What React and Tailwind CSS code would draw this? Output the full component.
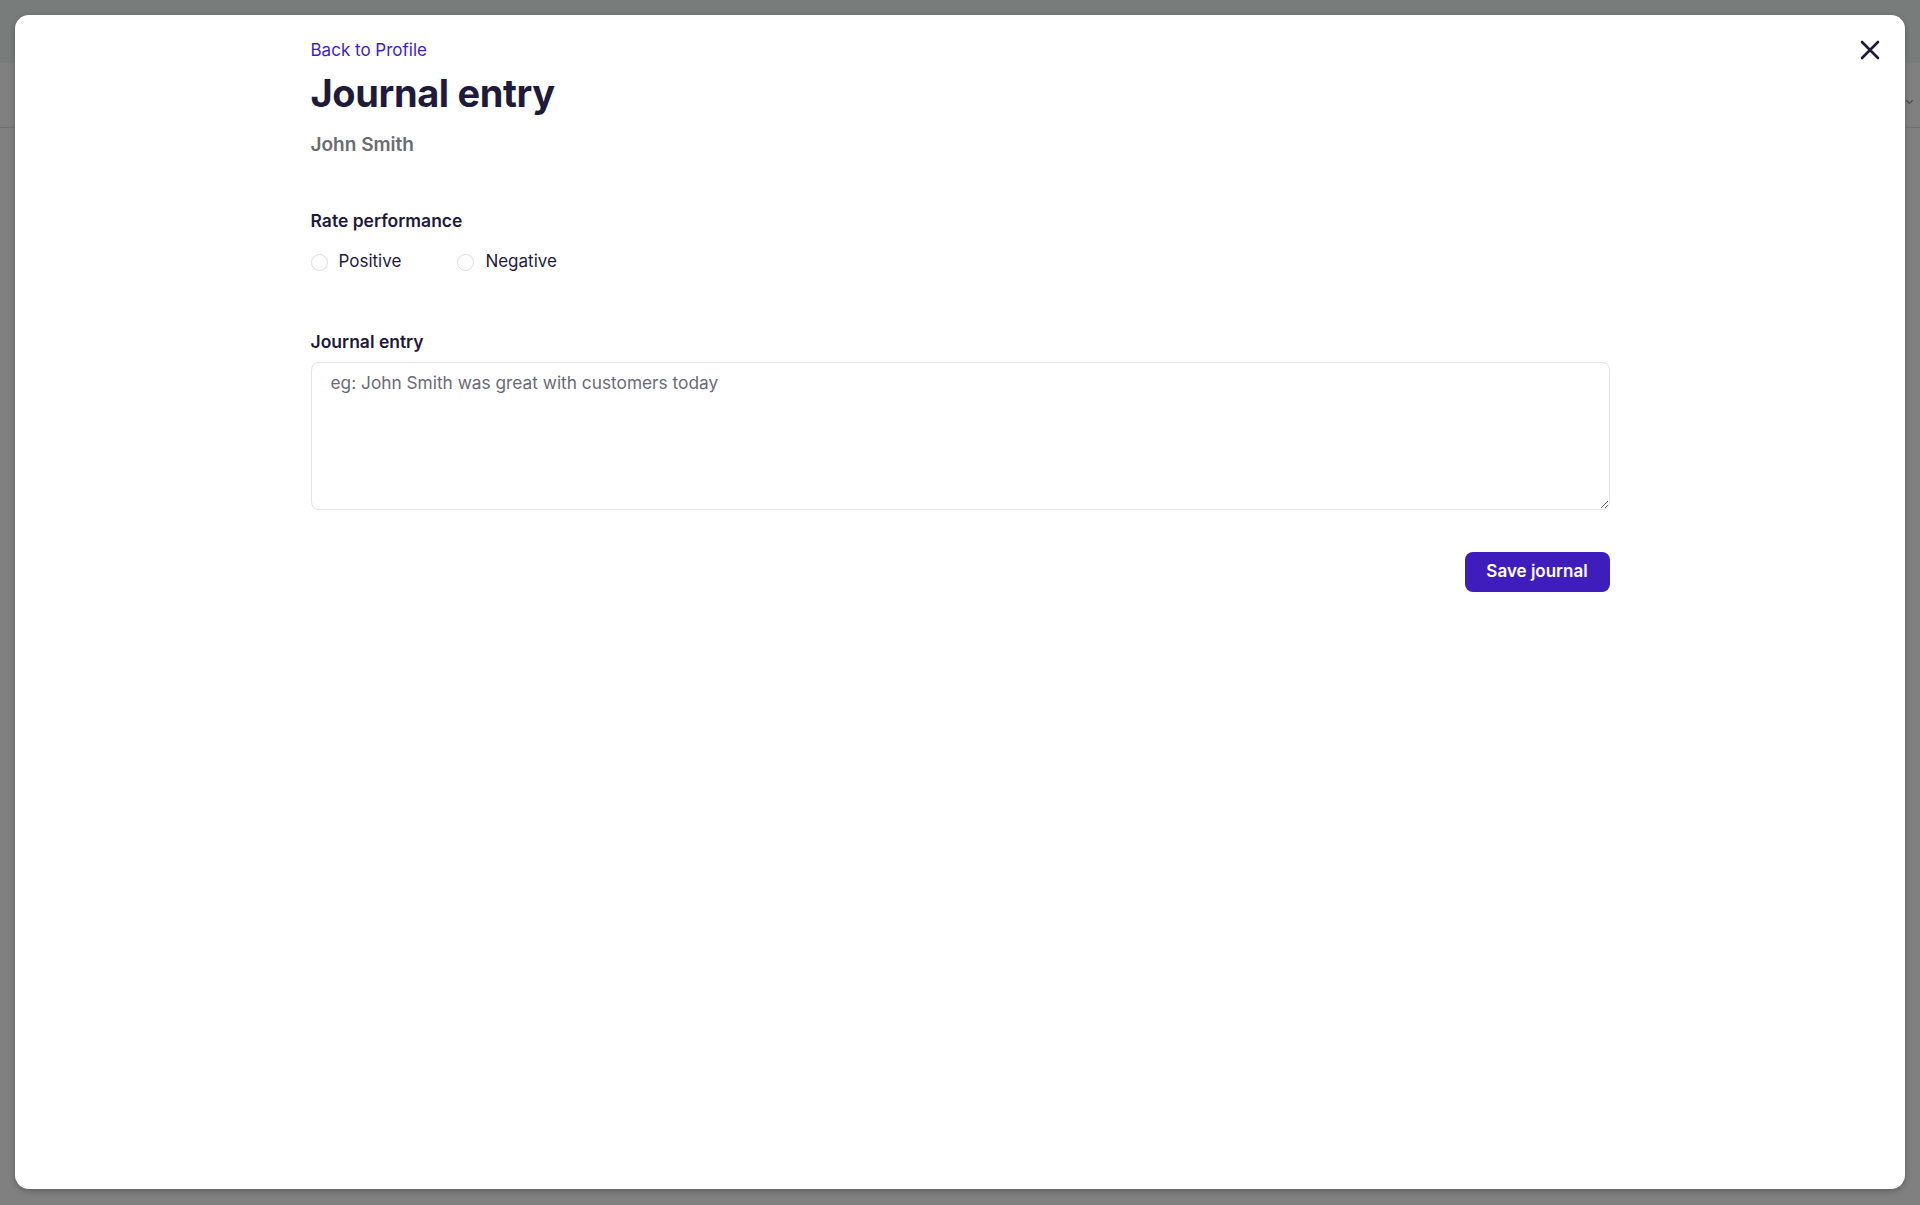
import React from "react";

export default function App() {
  return (
    <div className="relative w-[1920px] h-[1205px] overflow-hidden bg-[#808080]" style={{ fontFamily: "Inter, 'Noto Sans', sans-serif" }}>
      {/* background page under overlay */}
      <div className="h-[63px] bg-[#787d7c]" />
      <div className="h-[65px] bg-[#808080] border-b border-[#6f6f6f]" />
      <div className="absolute right-[6px] top-[92px] text-[#3a3a50] text-xs">⌄</div>

      {/* modal */}
      <div className="absolute left-[15px] top-[15px] w-[1890px] h-[1174px] bg-white rounded-[14px] shadow-[0_2px_6px_rgba(0,0,0,0.25)]">
        <button className="absolute right-[25px] top-[25px] w-[20px] h-[20px] flex items-center justify-center text-[#1e1a3c]">
          <svg width="20" height="20" viewBox="0 0 20 20" fill="none" stroke="currentColor" strokeWidth="2.6" strokeLinecap="round">
            <path d="M2 2L18 18M18 2L2 18" />
          </svg>
        </button>

        <div className="mx-auto w-[1299px] pt-[23px] flex flex-col">
          <a className="text-[17px] leading-6 text-[#3f1dcb]">Back to Profile</a>
          <h1 className="mt-[11px] text-[38px] leading-[40px] font-bold tracking-[-0.01em] text-[#1e1a3c]">Journal entry</h1>
          <div className="mt-[18px] text-[19px] leading-[28px] font-semibold text-[#6b6b70]">John Smith</div>

          <div className="mt-[50px] text-[17.5px] leading-6 font-semibold text-[#1e1a3c]">Rate performance</div>
          <div className="mt-[17px] flex items-center h-6 text-[17px] text-[#1e1a3c]">
            <label className="flex items-center">
              <span className="w-[17px] h-[17px] rounded-full border border-[#dcdce6] bg-white" />
              <span className="ml-[11px]">Positive</span>
            </label>
            <label className="flex items-center ml-[56px]">
              <span className="w-[17px] h-[17px] rounded-full border border-[#dcdce6] bg-white" />
              <span className="ml-[11px]">Negative</span>
            </label>
          </div>

          <div className="mt-[56px] text-[17.5px] leading-6 font-semibold text-[#1e1a3c]">Journal entry</div>
          <textarea
            className="mt-[8px] w-full h-[148px] rounded-[8px] border-[1.5px] border-[#e2e2ea] px-[19px] pt-[8px] pb-[8px] text-[17.3px] leading-6 text-[#1e1a3c] placeholder:text-[#6b6b78] outline-none"
            placeholder="eg: John Smith was great with customers today"
          />

          <div className="mt-[42px] flex justify-end">
            <button className="w-[145px] h-[40px] rounded-[8px] bg-[#3f1dbd] text-white text-[17px] font-semibold">Save journal</button>
          </div>
        </div>
      </div>
    </div>
  );
}
